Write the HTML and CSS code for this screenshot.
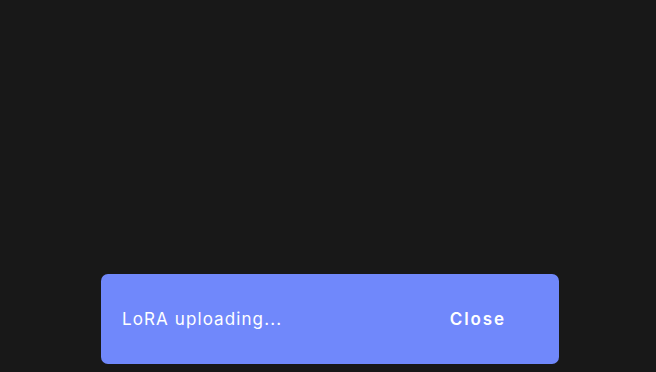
FILE: index.html
```html
<!DOCTYPE html>
<html lang="en">
<head>
<meta charset="UTF-8">
<meta name="viewport" content="width=device-width, initial-scale=1.0">
<title>Upload</title>
<link rel="stylesheet" href="styles.css">
</head>
<body>
    <!-- Notification -->
    <div class="toast">
        <span class="toast-text">LoRA uploading...</span>
        <button class="toast-close">Close</button>
    </div>
</body>
</html>
```
FILE: styles.css
```css
/* Styles généraux */
html, body {
    height: 100%;
}
body {
    margin: 0;
    padding: 0 0 8px 0;
    box-sizing: border-box;
    background-color: #181818;
    font-family: Inter, "Liberation Sans", sans-serif;
    display: flex;
    flex-direction: column;
    justify-content: flex-end;
    align-items: center;
}

/* Notification */
.toast {
    width: 458px;
    height: 90px;
    box-sizing: border-box;
    margin-left: 4px;
    padding: 0 37px 0 21px;
    background-color: #7088fb;
    border-radius: 7px;
    display: flex;
    align-items: center;
    justify-content: space-between;
    color: #fff;
}
.toast-text {
    font-size: 17px;
    letter-spacing: 1.1px;
}
.toast-close {
    background: none;
    border: none;
    color: #fff;
    font-family: inherit;
    font-size: 17px;
    font-weight: 600;
    letter-spacing: 1.9px;
    padding: 8px 16px;
    cursor: pointer;
}
```
